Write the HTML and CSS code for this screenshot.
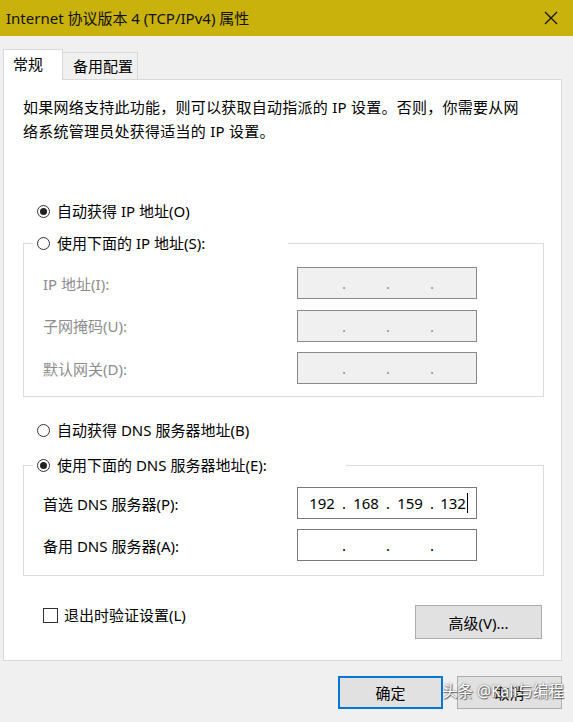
FILE: index.html
```html
<!DOCTYPE html>
<html lang="zh-CN">
<head>
<meta charset="utf-8">
<title>Internet 协议版本 4 (TCP/IPv4) 属性</title>
<link rel="stylesheet" href="styles.css">
</head>
<body>
<div class="window">
  <div class="titlebar">
    <span class="title">Internet 协议版本 4 (TCP/IPv4) 属性</span>
    <svg class="close" width="14" height="14" viewBox="0 0 14 14"><path d="M1 1 L13 13 M13 1 L1 13" stroke="#111" stroke-width="1.2" fill="none"/></svg>
  </div>
  <div class="content">
    <div class="tabs">
      <div class="tab active">常规</div>
      <div class="tab">备用配置</div>
    </div>
    <div class="panel">
      <p class="desc">如果网络支持此功能，则可以获取自动指派的 IP 设置。否则，你需要从网<br>络系统管理员处获得适当的 IP 设置。</p>

      <div class="radio first"><span class="circle checked"></span>自动获得 IP 地址(O)</div>

      <fieldset class="group group-ip">
        <legend class="legend legend-ip"><span class="radio"><span class="circle"></span>使用下面的 IP 地址(S):</span></legend>
        <div class="row disabled"><span class="lbl">IP 地址(I):</span><div class="ipbox"><span class="seg"></span><span class="sep">.</span><span class="seg"></span><span class="sep">.</span><span class="seg"></span><span class="sep">.</span><span class="seg"></span></div></div>
        <div class="row disabled"><span class="lbl">子网掩码(U):</span><div class="ipbox"><span class="seg"></span><span class="sep">.</span><span class="seg"></span><span class="sep">.</span><span class="seg"></span><span class="sep">.</span><span class="seg"></span></div></div>
        <div class="row disabled"><span class="lbl">默认网关(D):</span><div class="ipbox"><span class="seg"></span><span class="sep">.</span><span class="seg"></span><span class="sep">.</span><span class="seg"></span><span class="sep">.</span><span class="seg"></span></div></div>
      </fieldset>

      <div class="radio dns-auto"><span class="circle"></span>自动获得 DNS 服务器地址(B)</div>

      <fieldset class="group group-dns">
        <legend class="legend legend-dns"><span class="radio"><span class="circle checked"></span>使用下面的 DNS 服务器地址(E):</span></legend>
        <div class="row"><span class="lbl">首选 DNS 服务器(P):</span><div class="ipbox"><span class="seg">192</span><span class="sep">.</span><span class="seg">168</span><span class="sep">.</span><span class="seg">159</span><span class="sep">.</span><span class="seg last">132<span class="caret"></span></span></div></div>
        <div class="row"><span class="lbl">备用 DNS 服务器(A):</span><div class="ipbox"><span class="seg"></span><span class="sep">.</span><span class="seg"></span><span class="sep">.</span><span class="seg"></span><span class="sep">.</span><span class="seg"></span></div></div>
      </fieldset>

      <div class="bottom-row">
        <div class="check"><span class="box"></span>退出时验证设置(L)</div>
        <button class="btn advanced">高级(V)...</button>
      </div>
    </div>
    <div class="footer">
      <button class="btn primary">确定</button>
      <button class="btn">取消</button>
    </div>
    <div class="watermark">头条 @Kali与编程</div>
  </div>
</div>
</body>
</html>
```

FILE: styles.css
```css
* { box-sizing: border-box; }
html, body {
  margin: 0;
  padding: 0;
}
body {
  width: 573px;
  height: 722px;
  overflow: hidden;
  background: #f0f0f0;
  font-family: "Noto Sans", "Noto Sans CJK SC", sans-serif;
  font-size: 15px;
  color: #000;
}
.window {
  width: 573px;
  height: 722px;
  display: flex;
  flex-direction: column;
}
.titlebar {
  height: 36px;
  background: #c9b20b;
  display: flex;
  align-items: center;
  justify-content: space-between;
  padding: 0 15px 0 6px;
}
.title {
  font-size: 15px;
  color: #111;
  line-height: 20px;
}
.close { display: block; }
.content {
  position: relative;
  flex: 1;
  padding: 13px 11px 0 3px;
}
.tabs {
  display: flex;
  align-items: flex-end;
  height: 30px;
}
.tab {
  border: 1px solid #d9d9d9;
  border-bottom: none;
  background: #f0f0f0;
  height: 27px;
  width: 76px;
  margin-left: -1px;
  padding-left: 10px;
  line-height: 26px;
  font-size: 15px;
}
.tab.active {
  position: relative;
  z-index: 1;
  margin-left: 0;
  background: #fff;
  height: 31px;
  width: 60px;
  margin-bottom: -1px;
  padding-left: 9px;
  line-height: 28px;
}
.panel {
  background: #fff;
  border: 1px solid #d9d9d9;
  height: 582px;
  padding: 0 17px 0 19px;
}
.desc {
  margin: 15px 0 0;
  line-height: 24px;
  letter-spacing: 0.25px;
}
.radio {
  display: flex;
  align-items: center;
  line-height: 24px;
  white-space: nowrap;
}
.radio.first { margin: 56px 0 0 14px; }
.radio.dns-auto { margin: 21px 0 0 14px; }
.circle {
  width: 13px;
  height: 13px;
  border: 1px solid #333;
  border-radius: 50%;
  margin-right: 7px;
  display: flex;
  align-items: center;
  justify-content: center;
  flex: none;
}
.circle.checked::after {
  content: "";
  width: 7px;
  height: 7px;
  border-radius: 50%;
  background: #222;
}
.group {
  margin: 8px 0 0;
  padding: 0 0 12px 19px;
  border: 1px solid #dcdcdc;
  min-width: 0;
}
.group-dns {
  margin-top: 11px;
  padding-bottom: 14px;
}
.legend {
  padding: 0 0 0 4px;
  margin-left: -10px;
  height: 24px;
}
.legend-ip { width: 255px; }
.legend-dns { width: 313px; }
.group-ip .row:first-of-type { margin-top: 12px; }
.group-dns .row:first-of-type { margin-top: 10px; }
.row {
  display: flex;
  align-items: center;
  height: 32px;
  margin-top: 10.5px;
}
.group-dns .row { margin-top: 10px; }
.lbl {
  width: 254px;
  flex: none;
}
.row.disabled .lbl { color: #8d8d8d; }
.ipbox {
  width: 180px;
  height: 32px;
  border: 1px solid #7a7a7a;
  background: #fff;
  display: flex;
  align-items: center;
  padding-left: 6px;
}
.row.disabled .ipbox {
  background: #f0f0f0;
  border-color: #8a8a8a;
}
.seg {
  width: 36px;
  text-align: center;
  font-size: 15px;
  line-height: 20px;
  height: 20px;
  position: relative;
}
.seg.last { display: flex; justify-content: center; }
.caret {
  display: inline-block;
  width: 1px;
  height: 20px;
  background: #000;
  margin-left: 1px;
}
.sep {
  width: 8px;
  text-align: center;
  line-height: 20px;
  font-size: 15px;
}
.row.disabled .sep { color: #909090; }
.bottom-row {
  display: flex;
  justify-content: space-between;
  align-items: flex-start;
  margin: 27px 2px 0 20px;
}
.check {
  display: flex;
  align-items: center;
  line-height: 24px;
}
.box {
  width: 15px;
  height: 15px;
  border: 1px solid #333;
  margin-right: 6px;
}
.btn {
  font-family: "Noto Sans", "Noto Sans CJK SC", sans-serif;
  font-size: 15px;
  color: #000;
  background: #e1e1e1;
  border: 1px solid #adadad;
  padding: 0;
  height: 33px;
  width: 105px;
}
.btn.advanced {
  width: 127px;
  height: 34px;
  margin-top: 2px;
}
.btn.primary {
  border: 2px solid #0078d7;
}
.footer {
  display: flex;
  justify-content: flex-end;
  gap: 14px;
  margin-top: 15px;
}
.watermark {
  position: absolute;
  left: 442px;
  top: 645px;
  color: #fff;
  font-size: 15.5px;
  line-height: 20px;
  text-shadow: 0 0 2px #555, 1px 1px 1px #666;
  white-space: nowrap;
}
```
